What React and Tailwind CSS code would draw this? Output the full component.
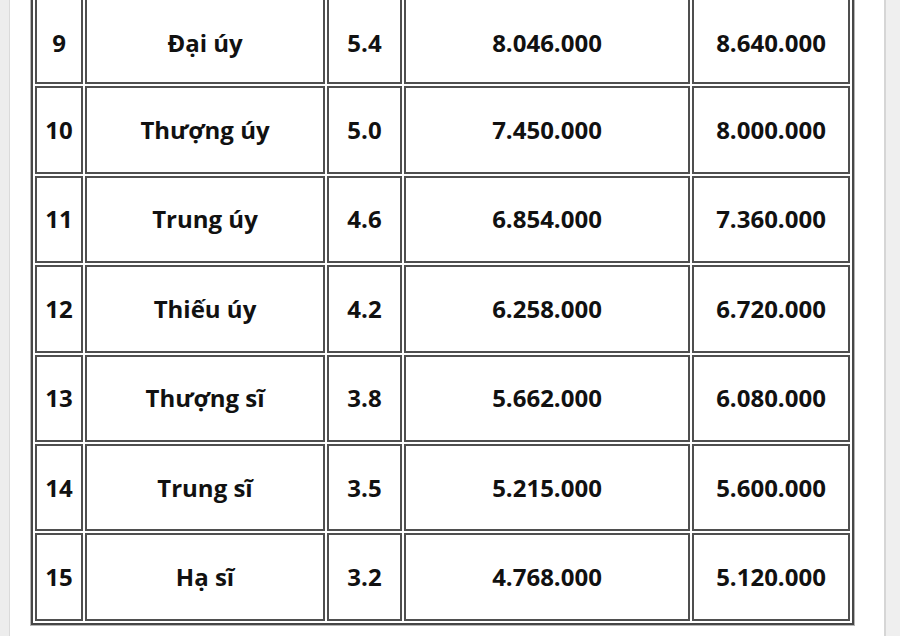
const rows = [
  { no: "9", rank: "Đại úy", coef: "5.4", a: "8.046.000", b: "8.640.000" },
  { no: "10", rank: "Thượng úy", coef: "5.0", a: "7.450.000", b: "8.000.000" },
  { no: "11", rank: "Trung úy", coef: "4.6", a: "6.854.000", b: "7.360.000" },
  { no: "12", rank: "Thiếu úy", coef: "4.2", a: "6.258.000", b: "6.720.000" },
  { no: "13", rank: "Thượng sĩ", coef: "3.8", a: "5.662.000", b: "6.080.000" },
  { no: "14", rank: "Trung sĩ", coef: "3.5", a: "5.215.000", b: "5.600.000" },
  { no: "15", rank: "Hạ sĩ", coef: "3.2", a: "4.768.000", b: "5.120.000" },
];

export default function App() {
  const cell =
    "border-2 border-[#4f4f4f] text-center align-middle h-[87.4px] p-0";

  return (
    <div className="flex w-[900px] h-[636px] overflow-hidden bg-white font-['Open_Sans',sans-serif] text-[#111]">
      {/* left page gutter */}
      <div className="w-[10px] shrink-0 bg-[#ededed] border-r border-[#dadada]" />

      {/* content */}
      <div className="flex-1 pl-[21px] pr-[29px]">
        <table className="-mt-[7px] w-[823px] table-fixed border-separate border-spacing-[2px] border-2 border-[#474747] shadow-[0_0_0_1px_#b5b5b5] text-[24px] font-bold">
          <tbody>
            {rows.map((r, i) => (
              <tr key={r.no}>
                <td className={`${cell} w-[48px] ${i === 0 ? "pt-[4px]" : ""}`}>{r.no}</td>
                <td className={`${cell} w-[240px] ${i === 0 ? "pt-[4px]" : ""}`}>{r.rank}</td>
                <td className={`${cell} w-[75px] ${i === 0 ? "pt-[4px]" : ""}`}>{r.coef}</td>
                <td className={`${cell} w-[286px] ${i === 0 ? "pt-[4px]" : ""}`}>{r.a}</td>
                <td className={`${cell} w-[158px] ${i === 0 ? "pt-[4px]" : ""}`}>{r.b}</td>
              </tr>
            ))}
          </tbody>
        </table>
      </div>

      {/* right sidebar edge */}
      <div className="w-[16px] shrink-0 bg-[#efefef] border-l-2 border-[#d6d6d6]" />
    </div>
  );
}
